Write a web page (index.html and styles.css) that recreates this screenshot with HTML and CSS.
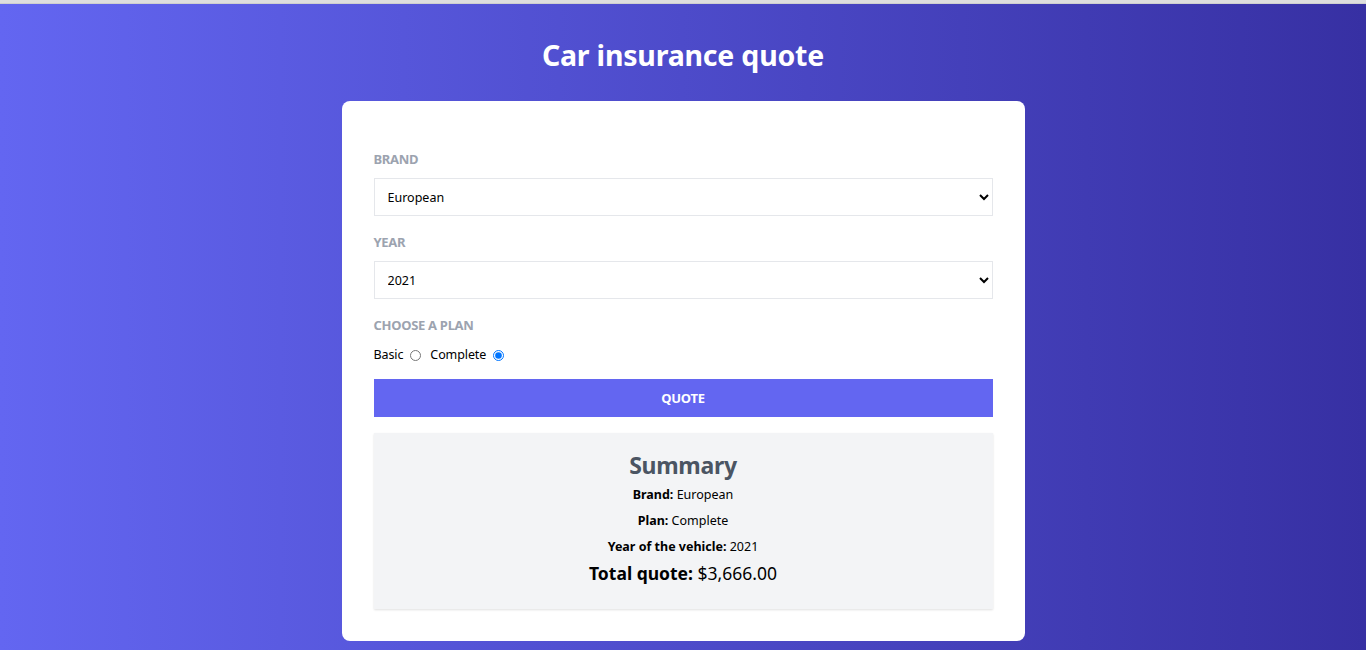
FILE: index.html
```html
<!DOCTYPE html>
<html lang="en">
<head>
<meta charset="utf-8">
<title>Car insurance quote</title>
<link rel="stylesheet" href="styles.css">
</head>
<body>
<div class="topbar"></div>
<main class="page">
  <h1 class="title">Car insurance quote</h1>
  <div class="card">
    <form class="form">
      <div class="field">
        <label class="label" for="brand">Brand</label>
        <select id="brand" class="select">
          <option>European</option>
          <option>American</option>
          <option>Asian</option>
        </select>
      </div>
      <div class="field">
        <label class="label" for="year">Year</label>
        <select id="year" class="select">
          <option>2021</option>
          <option>2020</option>
          <option>2019</option>
        </select>
      </div>
      <div class="field">
        <span class="label">Choose a plan</span>
        <div class="plans">
          <label class="plan" for="basic">Basic</label>
          <input class="radio" type="radio" name="plan" id="basic" value="basic">
          <label class="plan" for="complete">Complete</label>
          <input class="radio" type="radio" name="plan" id="complete" value="complete" checked>
        </div>
      </div>
      <button type="button" class="button">Quote</button>
    </form>
    <section class="summary">
      <h2 class="summary-title">Summary</h2>
      <p class="summary-line"><strong>Brand:</strong> European</p>
      <p class="summary-line"><strong>Plan:</strong> Complete</p>
      <p class="summary-line"><strong>Year of the vehicle:</strong> 2021</p>
      <p class="summary-total"><strong>Total quote:</strong> $3,666.00</p>
    </section>
  </div>
</main>
</body>
</html>
```

FILE: styles.css
```css
* { box-sizing: border-box; }

html, body {
  margin: 0;
  padding: 0;
  height: 100%;
}

body {
  font-family: "Noto Sans", "Open Sans", sans-serif;
  background: linear-gradient(to right, #6366f1, #3730a3);
  color: #000;
  overflow: hidden;
}

.topbar {
  height: 4px;
  background: #dedede;
  border-bottom: 1px solid #cfcfcf;
}

.page {
  display: flex;
  flex-direction: column;
  align-items: center;
}

.title {
  margin: 0;
  padding-top: 32px;
  height: 97px;
  font-size: 28.5px;
  line-height: 38px;
  font-weight: 700;
  color: #fff;
  letter-spacing: -0.2px;
}

.card {
  width: 50%;
  background: #fff;
  border-radius: 8px;
  padding: 32px;
}

.form {
  display: flex;
  flex-direction: column;
}

.field {
  margin-top: 16px;
}

.label {
  display: block;
  font-size: 13px;
  line-height: 20px;
  font-weight: 700;
  color: #9ca3af;
  text-transform: uppercase;
  margin-bottom: 9px;
  letter-spacing: -0.3px;
}

.select {
  display: block;
  width: 100%;
  height: 38px;
  padding: 0 8px 0 9px;
  border: 1px solid #e5e7eb;
  border-radius: 0;
  background: #fff;
  font-family: inherit;
  font-size: 12.5px;
  color: #000;
}

.plans {
  display: flex;
  align-items: center;
  height: 21px;
  padding-top: 1px;
  font-size: 12.5px;
  letter-spacing: -0.1px;
}

.plan {
  line-height: 20px;
}

.radio {
  margin: 0 9px 0 7px;
  width: 11px;
  height: 11px;
}

.button {
  margin-top: 14px;
  height: 38px;
  border: 0;
  background: #6366f1;
  color: #fff;
  font-family: inherit;
  font-size: 13px;
  font-weight: 700;
  text-transform: uppercase;
  letter-spacing: -0.3px;
}

.summary {
  margin-top: 16px;
  background: #f3f4f6;
  box-shadow: 0 1px 2px rgba(0, 0, 0, 0.12);
  padding: 16px 0 23px;
  display: flex;
  flex-direction: column;
  align-items: center;
  gap: 6px;
}

.summary-title {
  margin: 0 0 -2px;
  font-size: 23px;
  line-height: 32px;
  font-weight: 700;
  color: #4b5563;
  letter-spacing: -0.3px;
}

.summary-line {
  margin: 0;
  font-size: 12.5px;
  line-height: 20px;
}

.summary-total {
  margin: -3px 0 0;
  font-size: 17.5px;
  line-height: 26px;
}
```
